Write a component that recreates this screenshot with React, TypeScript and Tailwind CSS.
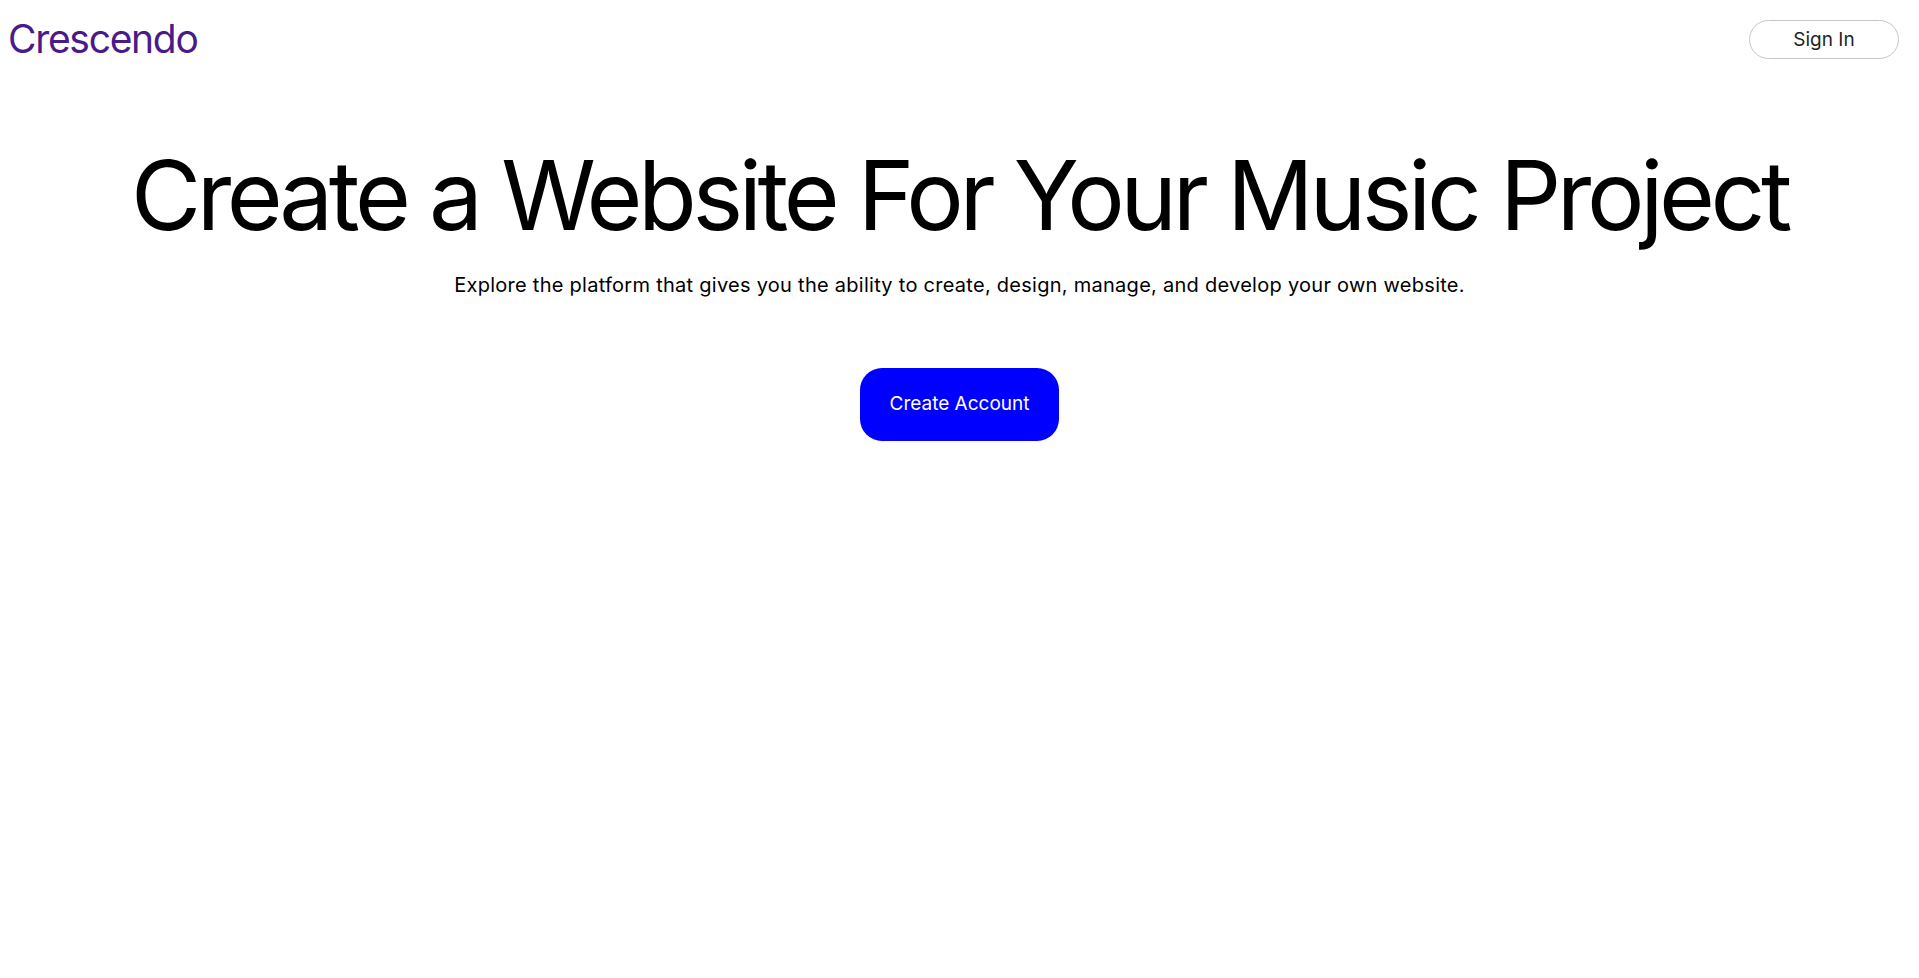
import React from "react";

export default function App() {
  return (
    <div
      className="min-h-screen w-full bg-white text-black"
      style={{ fontFamily: "Inter, 'Noto Sans', sans-serif" }}
    >
      <header className="flex items-start justify-between pl-[8px] pr-[20px]">
        <div className="mt-[15px] h-[48px] text-[39px] leading-[48px] tracking-[-1.3px] text-[#4a1a89]">
          Crescendo
        </div>
        <button className="mt-[20px] flex h-[39px] w-[150px] items-center justify-center rounded-full border border-[#c6c6c6] bg-white pt-[2px] text-[19px] text-[#1f1f1f]">
          Sign In
        </button>
      </header>
      <main className="flex flex-col items-center pt-[84px]">
        <h1 className="text-[96px] leading-none font-normal tracking-[-4.4px] whitespace-nowrap">
          Create a Website For Your Music Project
        </h1>
        <p className="mt-[30px] text-[20px] leading-[24px] tracking-[0.27px]">
          Explore the platform that gives you the ability to create, design, manage, and develop your own website.
        </p>
        <button className="mt-[71px] flex h-[73px] w-[199px] items-center justify-center rounded-[22px] bg-[#0000ff] text-[19px] text-white">
          Create Account
        </button>
      </main>
    </div>
  );
}
